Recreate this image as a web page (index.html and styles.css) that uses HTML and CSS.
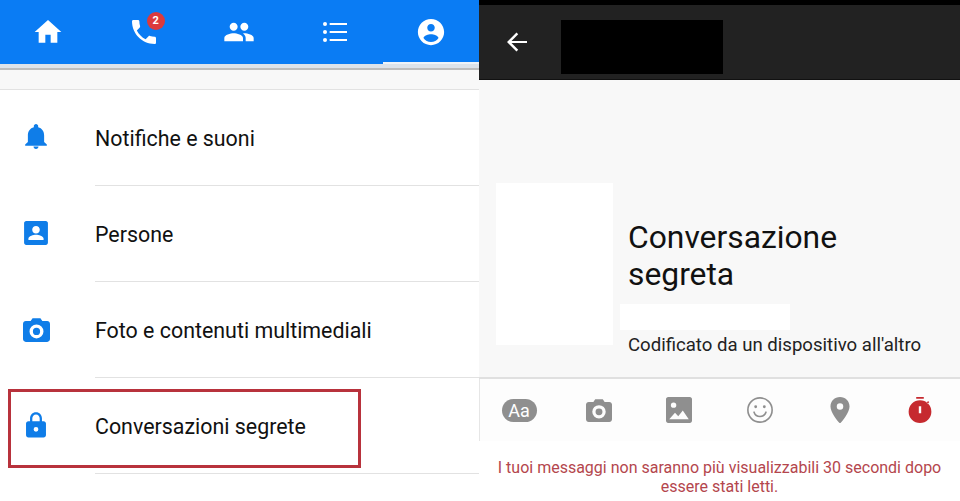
FILE: index.html
```html
<!DOCTYPE html>
<html lang="en">
<head>
    <meta charset="UTF-8">
    <title>Conversazioni segrete</title>
    <link rel="stylesheet" href="styles.css">
</head>
<body>
    <div class="page">
        <div class="settings">
            <div class="tabs">
                <div class="tab">
                    <svg class="tab-icon" viewBox="0 0 24 24"><path d="M10 20v-6h4v6h5v-8h3L12 3 2 12h3v8z"/></svg>
                </div>
                <div class="tab">
                    <span class="phone">
                        <svg class="tab-icon" viewBox="0 0 24 24"><path d="M6.62 10.79c1.44 2.83 3.76 5.14 6.59 6.59l2.2-2.2c.27-.27.67-.36 1.02-.24 1.12.37 2.33.57 3.57.57.55 0 1 .45 1 1V20c0 .55-.45 1-1 1-9.39 0-17-7.61-17-17 0-.55.45-1 1-1h3.5c.55 0 1 .45 1 1 0 1.25.2 2.45.57 3.57.11.35.03.74-.25 1.02l-2.2 2.2z"/></svg>
                        <span class="badge">2</span>
                    </span>
                </div>
                <div class="tab">
                    <svg class="tab-icon" viewBox="0 0 24 24"><path d="M16 11c1.66 0 2.99-1.34 2.99-3S17.66 5 16 5c-1.66 0-3 1.34-3 3s1.34 3 3 3zm-8 0c1.66 0 2.99-1.34 2.99-3S9.66 5 8 5C6.34 5 5 6.34 5 8s1.34 3 3 3zm0 2c-2.33 0-7 1.17-7 3.5V19h14v-2.5c0-2.33-4.67-3.5-7-3.5zm8 0c-.29 0-.62.02-.97.05 1.16.84 1.97 1.97 1.97 3.45V19h6v-2.5c0-2.33-4.67-3.5-7-3.5z"/></svg>
                </div>
                <div class="tab">
                    <svg class="tab-icon" viewBox="0 0 24 24"><circle cx="4.5" cy="6" r="1.5"/><circle cx="4.5" cy="12" r="1.5"/><circle cx="4.5" cy="18" r="1.5"/><path d="M8 5.200h13v1.600H8zM8 11.200h13v1.600H8zM8 17.200h13v1.600H8z"/></svg>
                </div>
                <div class="tab tab-active">
                    <svg class="tab-icon tab-icon-round" viewBox="0 0 24 24"><path d="M12 1.500C6.200 1.500 1.500 6.200 1.500 12S6.200 22.500 12 22.500 22.500 17.800 22.500 12 17.800 1.500 12 1.500zM12 5.500c1.700 0 3 1.300 3 3s-1.300 3-3 3-3-1.300-3-3 1.300-3 3-3zm0 14.500c-2.500 0-4.700-1.300-6-3.200.1-2 4-3.100 6-3.100s5.900 1.100 6 3.100c-1.300 1.900-3.500 3.200-6 3.200z"/></svg>
                </div>
            </div>
            <div class="tabs-shadow"></div>
            <div class="spacer"></div>

            <div class="row">
                <svg class="row-icon" viewBox="0 0 24 24"><path d="M12 23c1.300 0 2.300-1 2.300-2.200H9.700C9.700 22 10.700 23 12 23zm7.500-6.500v-6c0-3.700-2-6.700-5.500-7.500V1.700C14 1 13.100 0 12 0s-2 1-2 1.700V3c-3.500.8-5.500 3.800-5.500 7.500v6L2 19v1h20v-1z"/></svg>
                <span class="row-label">Notifiche e suoni</span>
            </div>
            <div class="row">
                <svg class="row-icon" viewBox="0 0 24 24"><path d="M3 1h18c1.200 0 2 .9 2 2v18c0 1.100-.8 2-2 2H3c-1.200 0-2-.9-2-2V3c0-1.100.8-2 2-2zm9 4.500c-2 0-3.500 1.600-3.500 3.500s1.500 3.500 3.500 3.500 3.500-1.600 3.500-3.500-1.500-3.500-3.500-3.500zM5 18.500h14V17c0-2.300-4.700-3.500-7-3.500S5 14.700 5 17z"/></svg>
                <span class="row-label">Persone</span>
            </div>
            <div class="row">
                <svg class="row-icon icon-wide" viewBox="0 0 24 24"><path d="M8.500 2 6.800 4.500H2.500C1.100 4.500 0 5.600 0 7v13.500C0 21.900 1.100 23 2.500 23h19c1.400 0 2.500-1.100 2.500-2.500V7c0-1.400-1.100-2.500-2.500-2.500h-4.300L15.500 2zM12 7.500a6.200 6.200 0 1 1 0 12.400 6.200 6.200 0 0 1 0-12.400zm0 3a3.200 3.200 0 1 0 0 6.400 3.200 3.200 0 0 0 0-6.400z"/></svg>
                <span class="row-label">Foto e contenuti multimediali</span>
            </div>
            <div class="row">
                <svg class="row-icon" viewBox="0 0 24 24"><path d="M19 8.500h-1.500V6c0-3.200-2.300-5.700-5.500-5.700S6.500 2.800 6.500 6v2.500H5c-1.300 0-2.200 1-2.200 2.200v10.600c0 1.300.9 2.200 2.200 2.200h14c1.300 0 2.200-.9 2.200-2.200V10.700c0-1.200-.9-2.200-2.200-2.200zM8.600 6c0-2 1.400-3.600 3.400-3.600S15.400 4 15.400 6v2.500H8.600zM12 18.200a2.200 2.200 0 1 1 0-4.400 2.200 2.200 0 0 1 0 4.400z"/></svg>
                <span class="row-label">Conversazioni segrete</span>
                <div class="highlight"></div>
            </div>
        </div>

        <div class="chat">
            <div class="status-bar"></div>
            <div class="toolbar">
                <svg class="back" viewBox="0 0 24 24"><path d="M22 11H6.500l6.700-6.700L11.500 2.600 2 12l9.500 9.400 1.700-1.700L6.500 13H22z"/></svg>
                <div class="redacted"></div>
            </div>
            <div class="thread">
                <div class="avatar"></div>
                <div class="intro">
                    <h1 class="intro-title">Conversazione segreta</h1>
                    <div class="name-mask"></div>
                    <p class="intro-sub">Codificato da un dispositivo all'altro</p>
                </div>
            </div>
            <div class="composer">
                <div class="tool"><span class="aa">Aa</span></div>
                <div class="tool">
                    <svg class="tool-icon" viewBox="0 0 24 24"><path d="M8.500 2 6.800 4.500H2.500C1.100 4.500 0 5.600 0 7v13.500C0 21.900 1.100 23 2.500 23h19c1.400 0 2.500-1.100 2.500-2.500V7c0-1.400-1.100-2.500-2.500-2.500h-4.300L15.500 2zM12 7.500a6.200 6.200 0 1 1 0 12.400 6.200 6.200 0 0 1 0-12.400zm0 3a3.200 3.200 0 1 0 0 6.400 3.200 3.200 0 0 0 0-6.400z"/></svg>
                </div>
                <div class="tool">
                    <svg class="tool-icon" viewBox="0 0 24 24"><path d="M2 0h20c1.100 0 2 .9 2 2v20c0 1.100-.9 2-2 2H2c-1.100 0-2-.9-2-2V2C0 .9.900 0 2 0zm5 5a2.500 2.500 0 1 0 0 5 2.500 2.500 0 0 0 0-5zM3 20.500h18l-5.500-8-4.200 5.200-3-3.200z" fill-rule="evenodd"/></svg>
                </div>
                <div class="tool">
                    <svg class="tool-icon smiley" viewBox="0 0 24 24"><circle class="smiley-line" cx="12" cy="12" r="11.200"/><path class="smiley-line" d="M6.500 14c1 2.800 3 4 5.500 4s4.500-1.200 5.500-4"/><circle cx="8" cy="9" r="1.300"/><circle cx="16" cy="9" r="1.300"/></svg>
                </div>
                <div class="tool">
                    <svg class="tool-icon" viewBox="0 0 24 24"><path d="M12 0C7 0 3.200 3.800 3.200 8.700 3.200 15 12 24.500 12 24.500S20.800 15 20.800 8.700C20.800 3.800 17 0 12 0zm0 11.700a3 3 0 1 1 0-6 3 3 0 0 1 0 6z"/></svg>
                </div>
                <div class="tool">
                    <svg class="tool-icon timer" viewBox="0 0 24 24"><path d="M8.500 0h7v1.600h-7zM12 3a10.500 10.500 0 1 1 0 21 10.500 10.500 0 0 1 0-21zM10.900 8.500v6.500h2.200V8.500zM19.500 3.800l1 1-1.500 1.500-1-1z" fill-rule="evenodd"/></svg>
                </div>
            </div>
            <p class="notice">I tuoi messaggi non saranno più visualizzabili 30 secondi dopo essere stati letti.</p>
        </div>
    </div>
</body>
</html>
```

FILE: styles.css
```css
* {
    margin: 0;
    padding: 0;
    box-sizing: border-box;
}

body {
    font-family: Roboto, sans-serif;
    background: white;
    overflow: hidden;
}

.page {
    display: flex;
    width: 960px;
    height: 501px;
    overflow: hidden;
}

/* left screenshot */
.settings {
    width: 479px;
    flex-shrink: 0;
}

.tabs {
    display: flex;
    height: 64px;
    background: #0a7cf4;
}

.tab {
    flex: 1;
    display: flex;
    align-items: center;
    justify-content: center;
}

.tab-active {
    border-bottom: 2px solid #eef3f8;
    padding-top: 2px;
}

.tab-icon {
    width: 32px;
    height: 32px;
    fill: white;
    display: block;
}

.tab-icon-round {
    width: 30px;
    height: 30px;
}

.phone {
    position: relative;
    display: block;
}

.badge {
    position: absolute;
    top: -4px;
    right: -5px;
    width: 18px;
    height: 18px;
    border-radius: 50%;
    background: #dc3a3c;
    color: white;
    font-size: 11px;
    font-weight: 700;
    line-height: 18px;
    text-align: center;
}

.tabs-shadow {
    height: 6px;
    background: #dde3ea;
    border-bottom: 2px solid #bdbdbd;
}

.spacer {
    height: 20px;
    background: #f8f8f8;
    border-bottom: 1px solid #e2e2e2;
}

.row {
    position: relative;
    display: flex;
    align-items: center;
    height: 96px;
    padding-left: 95px;
}

.row::after {
    content: "";
    position: absolute;
    left: 95px;
    right: 0;
    bottom: 0;
    height: 1px;
    background: #e2e2e2;
}

.row-icon {
    position: absolute;
    left: 23px;
    top: 34px;
    width: 26px;
    height: 26px;
    fill: #0f7de8;
}

.icon-wide {
    left: 23px;
    width: 27px;
    height: 27px;
}

.row-label {
    font-size: 21.4px;
    color: #111;
    margin-top: 1px;
}

.highlight {
    position: absolute;
    left: 8px;
    top: 11px;
    width: 353px;
    height: 79px;
    border: 3px solid #b8323c;
}

/* right screenshot */
.chat {
    flex: 1;
    display: flex;
    flex-direction: column;
    min-width: 0;
}

.status-bar {
    height: 5px;
    background: black;
}

.toolbar {
    display: flex;
    align-items: center;
    height: 75px;
    background: #222;
    border-bottom: 1px solid #111;
    padding-left: 26px;
}

.back {
    width: 24px;
    height: 24px;
    fill: white;
    margin-top: -1px;
}

.redacted {
    width: 162px;
    height: 54px;
    background: black;
    margin-left: 32px;
    margin-top: 10px;
}

.thread {
    display: flex;
    height: 299px;
    background: #f8f8f8;
    border-bottom: 2px solid #e0e0e0;
    padding: 103px 0 0 17px;
}

.avatar {
    width: 117px;
    height: 162px;
    background: white;
}

.intro {
    padding: 36px 0 0 15px;
}

.intro-title {
    width: 240px;
    font-size: 31.8px;
    font-weight: 400;
    line-height: 37px;
    color: #111;
}

.name-mask {
    width: 170px;
    height: 26px;
    margin: 11px 0 0 -8px;
    background: white;
}

.intro-sub {
    font-size: 18.6px;
    line-height: 20px;
    margin-top: 5px;
    color: #222;
    white-space: nowrap;
}

.composer {
    display: flex;
    height: 62px;
    background: #fdfdfd;
    box-shadow: inset 1px 0 0 #e6e6e6;
}

.tool {
    flex: 1;
    display: flex;
    align-items: center;
    justify-content: center;
}

.tool-icon {
    width: 26px;
    height: 26px;
    fill: #8f8f8f;
}

.smiley-line {
    fill: none;
    stroke: #8f8f8f;
    stroke-width: 1.5;
    stroke-linecap: round;
}

.timer {
    fill: #c62a2f;
}

.aa {
    width: 35px;
    height: 23px;
    border-radius: 12px;
    background: #8f8f8f;
    color: white;
    font-size: 18px;
    line-height: 23px;
    text-align: center;
}

.notice {
    padding: 17px 14px 0;
    font-size: 16px;
    line-height: 19px;
    text-align: center;
    color: #b4464d;
}
```
